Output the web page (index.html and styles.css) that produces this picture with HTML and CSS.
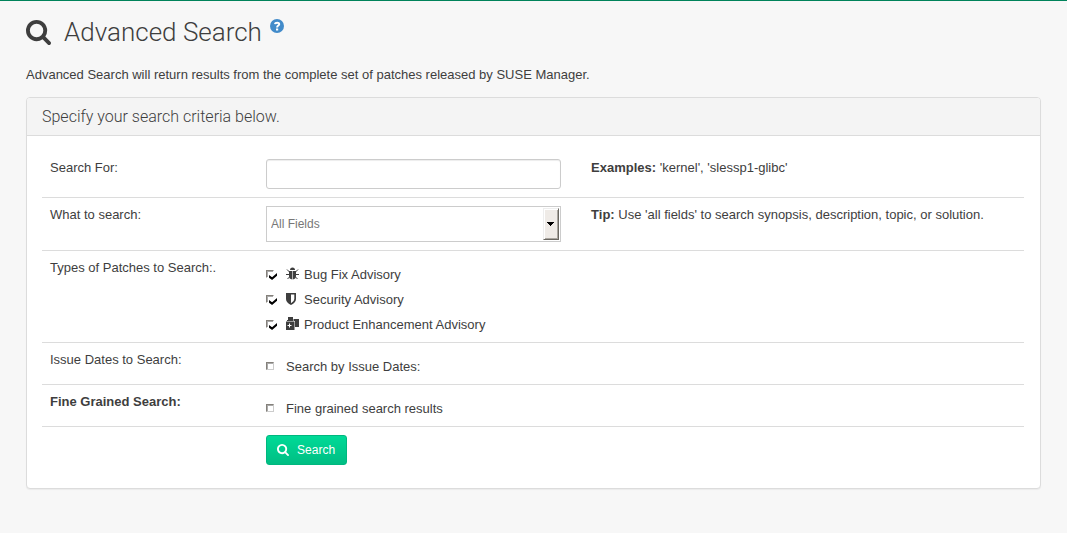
FILE: index.html
```html
<!DOCTYPE html>
<html lang="en">
<head>
<meta charset="utf-8">
<title>Advanced Search</title>
<link rel="stylesheet" href="styles.css">
</head>
<body>
<svg class="defs" aria-hidden="true">
  <symbol id="magnifier" viewBox="0 0 1664 1664">
    <path d="M1152 704q0-185-131.500-316.500t-316.500-131.500-316.500 131.500-131.500 316.500 131.500 316.500 316.500 131.500 316.500-131.500 131.500-316.500zm512 832q0 52-38 90t-90 38q-54 0-90-38l-343-342q-179 124-399 124-143 0-273.500-55.500t-225-150-150-225-55.500-273.500 55.500-273.500 150-225 225-150 273.500-55.500 273.500 55.500 225 150 150 225 55.500 273.500q0 220-124 399l343 343q37 37 37 90z"/>
  </symbol>
</svg>
<main class="page">
  <header class="page-head">
    <svg class="head-icon" aria-hidden="true"><use href="#magnifier"/></svg>
    <h1 class="title">Advanced Search</h1>
    <a class="help" href="#help" aria-label="Help">
      <svg class="help-icon" viewBox="0 0 14 14" aria-hidden="true">
        <circle class="help-disc" cx="7" cy="7" r="7"/>
        <path class="help-hook" d="M4.900 5.200C5.200 3.400 9.300 3.300 9.200 5.300C9.200 6.600 7.100 6.600 7.100 8.500"/>
        <path class="help-dot" d="M6 9.500h2.200v2H6z"/>
      </svg>
    </a>
  </header>
  <p class="intro">Advanced Search will return results from the complete set of patches released by SUSE Manager.</p>
  <form class="panel">
    <h2 class="panel-head">Specify your search criteria below.</h2>
    <div class="panel-body">
      <div class="row">
        <label class="label" for="query">Search For:</label>
        <div class="field"><input class="text-box" id="query" type="text"></div>
        <p class="hint"><strong>Examples:</strong> 'kernel', 'slessp1-glibc'</p>
      </div>
      <div class="row">
        <label class="label" for="scope">What to search:</label>
        <div class="field">
          <div class="select-wrap">
            <select class="select" id="scope"><option>All Fields</option></select>
            <span class="arrow" aria-hidden="true"><svg class="arrow-icon" viewBox="0 0 7 4" shape-rendering="crispEdges"><path d="M0 0h7v1H6v1H5v1H4v1H3V3H2V2H1V1H0z"/></svg></span>
          </div>
        </div>
        <p class="hint"><strong>Tip:</strong> Use 'all fields' to search synopsis, description, topic, or solution.</p>
      </div>
      <div class="row" role="group" aria-labelledby="types">
        <span class="label" id="types">Types of Patches to Search:.</span>
        <div class="field checks">
          <label class="check"><input class="box" type="checkbox" checked>
            <svg class="kind" viewBox="0 0 13 13" aria-hidden="true"><path d="M4 3a2.500 2.500 0 0 1 5 0z"/><path d="M3 4h3.200v8.500Q3 12 3 9zM6.800 4H10v5Q10 12 6.800 12.500z"/><path class="legs" d="M1 2.500L3.500 5M12 2.500L9.500 5M0 7.500h4M9 7.500h4M1.500 12L4 9.500M11.500 12L9 9.500"/></svg>
            <span class="check-text">Bug Fix Advisory</span></label>
          <label class="check"><input class="box" type="checkbox" checked>
            <svg class="kind" viewBox="0 0 13 13" aria-hidden="true"><path fill-rule="evenodd" d="M0 1h10v6q0 3.500-5 6Q0 10.500 0 7zM5 2.500v8.800Q8.300 9.500 8.300 7V2.500z"/></svg>
            <span class="check-text">Security Advisory</span></label>
          <label class="check"><input class="box" type="checkbox" checked>
            <svg class="kind" viewBox="0 0 13 13" aria-hidden="true"><path d="M2 0h5v4H1V3h1zM7.500 2H13v8H9V4H7.500z"/><path fill-rule="evenodd" d="M0 4.500h8.500V13H0zM3 6.500V8H1.500v1H3v1.500h1V9h1.500V8H4V6.500z"/></svg>
            <span class="check-text">Product Enhancement Advisory</span></label>
        </div>
      </div>
      <div class="row">
        <span class="label">Issue Dates to Search:</span>
        <div class="field checks"><label class="check"><input class="box" type="checkbox"><span class="check-text">Search by Issue Dates:</span></label></div>
      </div>
      <div class="row">
        <strong class="label">Fine Grained Search:</strong>
        <div class="field checks"><label class="check"><input class="box" type="checkbox"><span class="check-text">Fine grained search results</span></label></div>
      </div>
      <div class="row">
        <div class="field actions"><button class="button" type="submit"><svg class="button-icon" aria-hidden="true"><use href="#magnifier"/></svg>Search</button></div>
      </div>
    </div>
  </form>
</main>
</body>
</html>
```
FILE: styles.css
```css
* { box-sizing: border-box; }
body {
  margin: 0;
  min-height: 100vh;
  border-top: 1px solid #00835b;
  background: #f7f7f7;
  color: #3e3e3e;
  font: 13px/20px "Liberation Sans", Arial, sans-serif;
}
.defs { display: none; }
.page { padding: 14px 26px 44px; }
.page-head { display: flex; align-items: flex-start; }
.head-icon { width: 25px; height: 25px; margin: 5px 13px 0 0; fill: #3e3e3e; }
.title { margin: 0; font: 300 26px/34px Roboto, sans-serif; }
.help { margin: 4px 0 0 8px; }
.help-icon { display: block; width: 14px; height: 14px; }
.help-disc { fill: #428bca; }
.help-hook { fill: none; stroke: #fff; stroke-width: 2; }
.help-dot { fill: #fff; }
.intro { margin: 16px 0 12px; }
.panel {
  border: 1px solid #dcdcdc;
  border-radius: 4px;
  background: #fff;
  box-shadow: 0 1px 1px rgba(0, 0, 0, .05);
}
.panel-head {
  margin: 0;
  padding: 9px 15px;
  border-bottom: 1px solid #dcdcdc;
  border-radius: 3px 3px 0 0;
  background: #f4f4f4;
  font: 300 16px/19px Roboto, sans-serif;
}
.panel-body { padding: 15px 16px 15px 15px; }
.row {
  display: grid;
  grid-template-columns: 22% 1fr 44.9%;
  padding: 8px 0;
}
.row + .row { border-top: 1px solid #dcdcdc; }
.label, .hint { margin: 0; padding: 0 8px; line-height: 18px; }
.field { padding: 0 22px 0 8px; }
.text-box {
  display: block;
  width: 100%;
  height: 30px;
  padding: 4px 8px;
  border: 1px solid #ccc;
  border-radius: 3px;
  background: #fff;
  box-shadow: inset 0 1px 1px rgba(0, 0, 0, .075);
  font: inherit;
}
.select-wrap { position: relative; }
.select {
  display: block;
  width: 100%;
  height: 36px;
  padding: 0 22px 0 4px;
  appearance: none;
  border: 1px solid #ccc;
  border-radius: 0;
  background: #fff;
  color: #777;
  font: 12px/20px "Liberation Sans", Arial, sans-serif;
}
.arrow {
  position: absolute;
  top: 2px;
  right: 2px;
  bottom: 2px;
  display: grid;
  place-items: center;
  width: 16px;
  padding-right: 1px;
  border: 1px solid;
  border-color: #eee #6b6862 #6b6862 #eee;
  background: #efebe7;
  box-shadow: inset 1px 1px #fff, inset -1px -1px #aaa6a0;
  pointer-events: none;
}
.arrow-icon { width: 7px; height: 4px; }
.checks { padding-top: 5px; padding-right: 0; }
.check { display: flex; align-items: center; height: 20px; }
.check + .check { margin-top: 5px; }
.check-text { padding-top: 2px; }
.box {
  appearance: none;
  width: 8px;
  height: 8px;
  margin: 0 12px 0 0;
  border: 1px solid;
  border-color: #85817b #ccc #ccc #85817b;
  background: #fff;
  box-shadow: inset 1px 1px #aaa;
}
.box:checked { position: relative; border-right-color: #fff; border-bottom-color: #fff; }
.box:checked::after {
  content: "";
  position: absolute;
  left: 2px;
  top: 2px;
  width: 8px;
  height: 7px;
  background: #000;
  clip-path: polygon(0 30%, 38% 62%, 100% 0, 100% 38%, 38% 100%, 0 68%);
}
.kind { width: 13px; height: 13px; margin: 0 5px 2px 0; fill: #3e3e3e; }
.legs { stroke: #3e3e3e; }
.actions { grid-column: 2; }
.button {
  display: flex;
  align-items: center;
  height: 30px;
  padding: 0 11px 0 10px;
  border: 1px solid #00b77f;
  border-radius: 3px;
  background: linear-gradient(#00da97, #00be83);
  color: #fff;
  font: 12px/18px "Liberation Sans", Arial, sans-serif;
}
.button-icon { width: 12px; height: 12px; margin-right: 8px; fill: #fff; }
```
